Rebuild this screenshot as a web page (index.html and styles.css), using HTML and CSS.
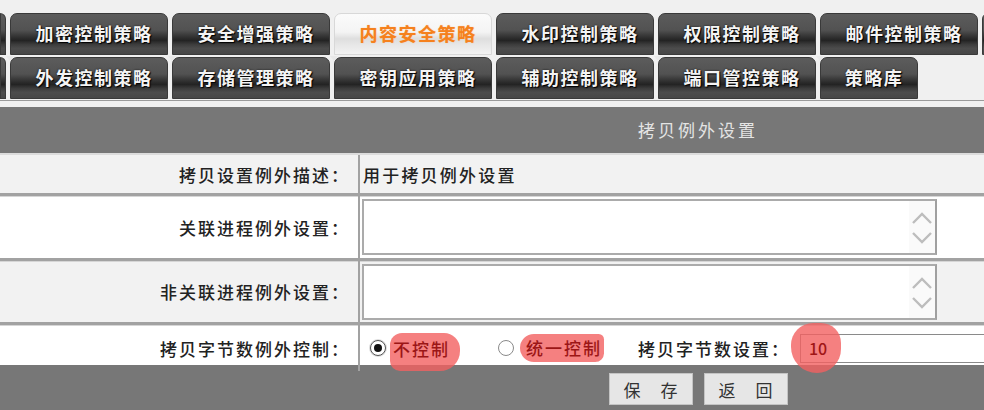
FILE: index.html
```html
<!DOCTYPE html>
<html lang="zh-CN">
<head>
<meta charset="utf-8">
<title>拷贝例外设置</title>
<link rel="stylesheet" href="styles.css">
</head>
<body>
<div class="tabs">
  <div class="tab-row">
    <div class="tab stub-left"></div>
    <div class="tab">加密控制策略</div>
    <div class="tab">安全增强策略</div>
    <div class="tab active">内容安全策略</div>
    <div class="tab">水印控制策略</div>
    <div class="tab">权限控制策略</div>
    <div class="tab">邮件控制策略</div>
    <div class="tab stub-right"></div>
  </div>
  <div class="tab-row">
    <div class="tab stub-left"></div>
    <div class="tab notch">外发控制策略</div>
    <div class="tab notch">存储管理策略</div>
    <div class="tab notch">密钥应用策略</div>
    <div class="tab">辅助控制策略</div>
    <div class="tab notch">端口管控策略</div>
    <div class="tab notch short">策略库</div>
  </div>
</div>

<div class="panel">
  <div class="panel-head">拷贝例外设置</div>

  <div class="row row-desc shaded">
    <div class="label">拷贝设置例外描述：</div>
    <div class="value text">用于拷贝例外设置</div>
  </div>

  <div class="row row-area">
    <div class="label">关联进程例外设置：</div>
    <div class="value">
      <div class="area">
        <div class="area-body"></div>
        <div class="area-scroll">
          <svg width="24" height="48" viewBox="0 0 24 48"><polyline points="3,20 12,11 21,20" fill="none" stroke="#bdbdbd" stroke-width="2.4"/><polyline points="3,30 12,39 21,30" fill="none" stroke="#bdbdbd" stroke-width="2.4"/></svg>
        </div>
      </div>
    </div>
  </div>

  <div class="row row-area2 shaded">
    <div class="label">非关联进程例外设置：</div>
    <div class="value">
      <div class="area">
        <div class="area-body"></div>
        <div class="area-scroll">
          <svg width="24" height="48" viewBox="0 0 24 48"><polyline points="3,20 12,11 21,20" fill="none" stroke="#bdbdbd" stroke-width="2.4"/><polyline points="3,30 12,39 21,30" fill="none" stroke="#bdbdbd" stroke-width="2.4"/></svg>
        </div>
      </div>
    </div>
  </div>

  <div class="row row-ctrl">
    <div class="label">拷贝字节数例外控制：</div>
    <div class="value ctrl">
      <span class="radio checked"></span>
      <span class="mark mark-a">不控制</span>
      <span class="radio second"></span>
      <span class="mark mark-b">统一控制</span>
      <span class="bytes-label">拷贝字节数设置：</span>
      <span class="bytes-input"><span class="mark mark-c">10</span></span>
    </div>
  </div>

  <div class="panel-foot">
    <button class="btn">保 存</button>
    <button class="btn">返 回</button>
  </div>
</div>
</body>
</html>
```

FILE: styles.css
```css
html, body {
  margin: 0;
  padding: 0;
  overflow: hidden;
  background: #f0f0f0;
  font-family: "Noto Sans CJK SC", "Noto Sans", sans-serif;
  color: #222;
}

.tabs {
  padding-top: 13px;
  display: flex;
  flex-direction: column;
  gap: 2px;
  width: 1100px;
}

.tab-row {
  display: flex;
  gap: 4px;
  height: 42px;
}

.tab {
  position: relative;
  box-sizing: border-box;
  width: 158px;
  height: 42px;
  border-radius: 7px 7px 0 0;
  background: linear-gradient(to bottom, #5c5c5c 0%, #525252 40%, #303030 58%, #232323 66%, #3c3c3c 76%, #4c4c4c 86%, #474747 100%);
  color: #f4f4f4;
  font-size: 18px;
  font-weight: 700;
  letter-spacing: 1.5px;
  text-shadow: 1px 1px 1px #000, 0 0 2px #111;
  display: flex;
  align-items: center;
  justify-content: center;
  padding-left: 10px;
  padding-bottom: 2px;
  border: 1px solid #3a3a3a;
}

.tab.stub-left {
  width: 6px;
  padding: 0;
  border-radius: 0 6px 0 0;
}

.tab.stub-right {
  width: 10px;
  padding: 0;
  border-radius: 6px 0 0 0;
}

.tab.short {
  width: 98px;
}

.tab.active {
  background: linear-gradient(to bottom, #fbfbfb 0%, #f4f4f4 45%, #dedede 62%, #e6e6e6 75%, #f2f2f2 100%);
  color: #f5811e;
  text-shadow: 0 0 1px #f7b070;
  border-color: #d8d8d8;
}

.tab.notch::before {
  content: "";
  position: absolute;
  left: -5px;
  top: -2px;
  border-left: 4px solid transparent;
  border-right: 4px solid transparent;
  border-top: 5px solid #e8e8e8;
}

.panel {
  width: 1396px;
  margin-top: 1px;
  border-top: 1px solid #9a9a9a;
  padding-top: 6px;
}

.panel-head {
  height: 46px;
  background: #777777;
  color: #e4e4e4;
  font-size: 17px;
  letter-spacing: 3px;
  display: flex;
  align-items: center;
  justify-content: center;
  padding-bottom: 2px;
  box-sizing: border-box;
}

.row {
  display: grid;
  grid-template-columns: 360px 1fr;
  background: #ffffff;
  border-top: 3px solid #a2a2a2;
  box-shadow: inset 0 1px 0 #d6d6d6;
}

.row.shaded {
  background: #f2f2f2;
}

.row-desc {
  height: 38px;
  border-top: 2px solid #dcdcdc;
  box-shadow: none;
}

.row-area {
  height: 62px;
}

.row-area2 {
  height: 61px;
}

.row-ctrl {
  height: 40px;
}

.label {
  box-sizing: border-box;
  border-right: 2px solid #a2a2a2;
  text-align: right;
  padding-right: 8px;
  font-size: 17px;
  font-weight: 500;
  letter-spacing: 2px;
  display: flex;
  align-items: center;
  justify-content: flex-end;
}

.value {
  display: flex;
  align-items: center;
}

.value.text {
  padding-left: 3px;
  font-size: 17px;
  font-weight: 500;
  letter-spacing: 2.2px;
}

.area {
  width: 575px;
  height: 56px;
  margin-left: 2px;
  box-sizing: border-box;
  border: 2px solid #ababab;
  border-right-color: #a0a0a0;
  background: #ffffff;
  display: flex;
}

.area-body {
  flex: 1;
}

.area-scroll {
  width: 26px;
  background: #fafafa;
  display: flex;
  align-items: center;
  justify-content: center;
}

.ctrl {
  padding-left: 10px;
  font-size: 17px;
  font-weight: 500;
  letter-spacing: 2px;
  position: relative;
}

.radio {
  box-sizing: border-box;
  width: 16px;
  height: 16px;
  border-radius: 50%;
  border: 1.5px solid #8a8a8a;
  background: #fff;
  display: inline-flex;
  align-items: center;
  justify-content: center;
  flex: none;
}

.radio.checked {
  border-color: #555;
  box-shadow: 0 0 0 1px #ddd;
}

.radio.checked::after {
  content: "";
  width: 8px;
  height: 8px;
  border-radius: 50%;
  background: #111;
}

.radio.second {
  margin-left: 38px;
}

.mark {
  background: rgba(242, 96, 96, 0.8);
  color: #9c1616;
  border-radius: 14px;
}

.mark-a {
  margin-left: 4px;
  padding: 3px 10px 10px 3px;
  margin-top: 8px;
  border-radius: 12px 16px 20px 10px;
}

.mark-b {
  margin-left: 6px;
  padding: 1px 2px 2px 6px;
  border-radius: 16px 6px 10px 16px;
}

.bytes-label {
  margin-left: 34px;
  color: #222;
}

.bytes-input {
  margin-left: 10px;
  flex: 1;
  height: 29px;
  box-sizing: border-box;
  border: 1px solid #8a8a8a;
  border-right: none;
  background: #fff;
  display: flex;
  align-items: center;
  position: relative;
}

.mark-c {
  position: absolute;
  left: -10px;
  top: -12px;
  width: 50px;
  height: 50px;
  border-radius: 22px 20px 24px 26px;
  display: flex;
  align-items: center;
  justify-content: center;
  letter-spacing: 0;
  font-size: 16px;
  color: #a01616;
  padding-left: 4px;
  box-sizing: border-box;
}

.panel-foot {
  height: 50px;
  background: #777777;
  display: flex;
  justify-content: center;
  align-items: flex-start;
  gap: 11px;
  padding-top: 8px;
  box-sizing: border-box;
}

.btn {
  width: 84px;
  height: 32px;
  background: #e6e6e6;
  border: 1px solid #c4c4c4;
  border-radius: 0;
  font-family: "Noto Sans CJK SC", "Noto Sans", sans-serif;
  font-size: 17px;
  letter-spacing: 8px;
  padding: 0 0 0 8px;
  color: #333;
}
```
